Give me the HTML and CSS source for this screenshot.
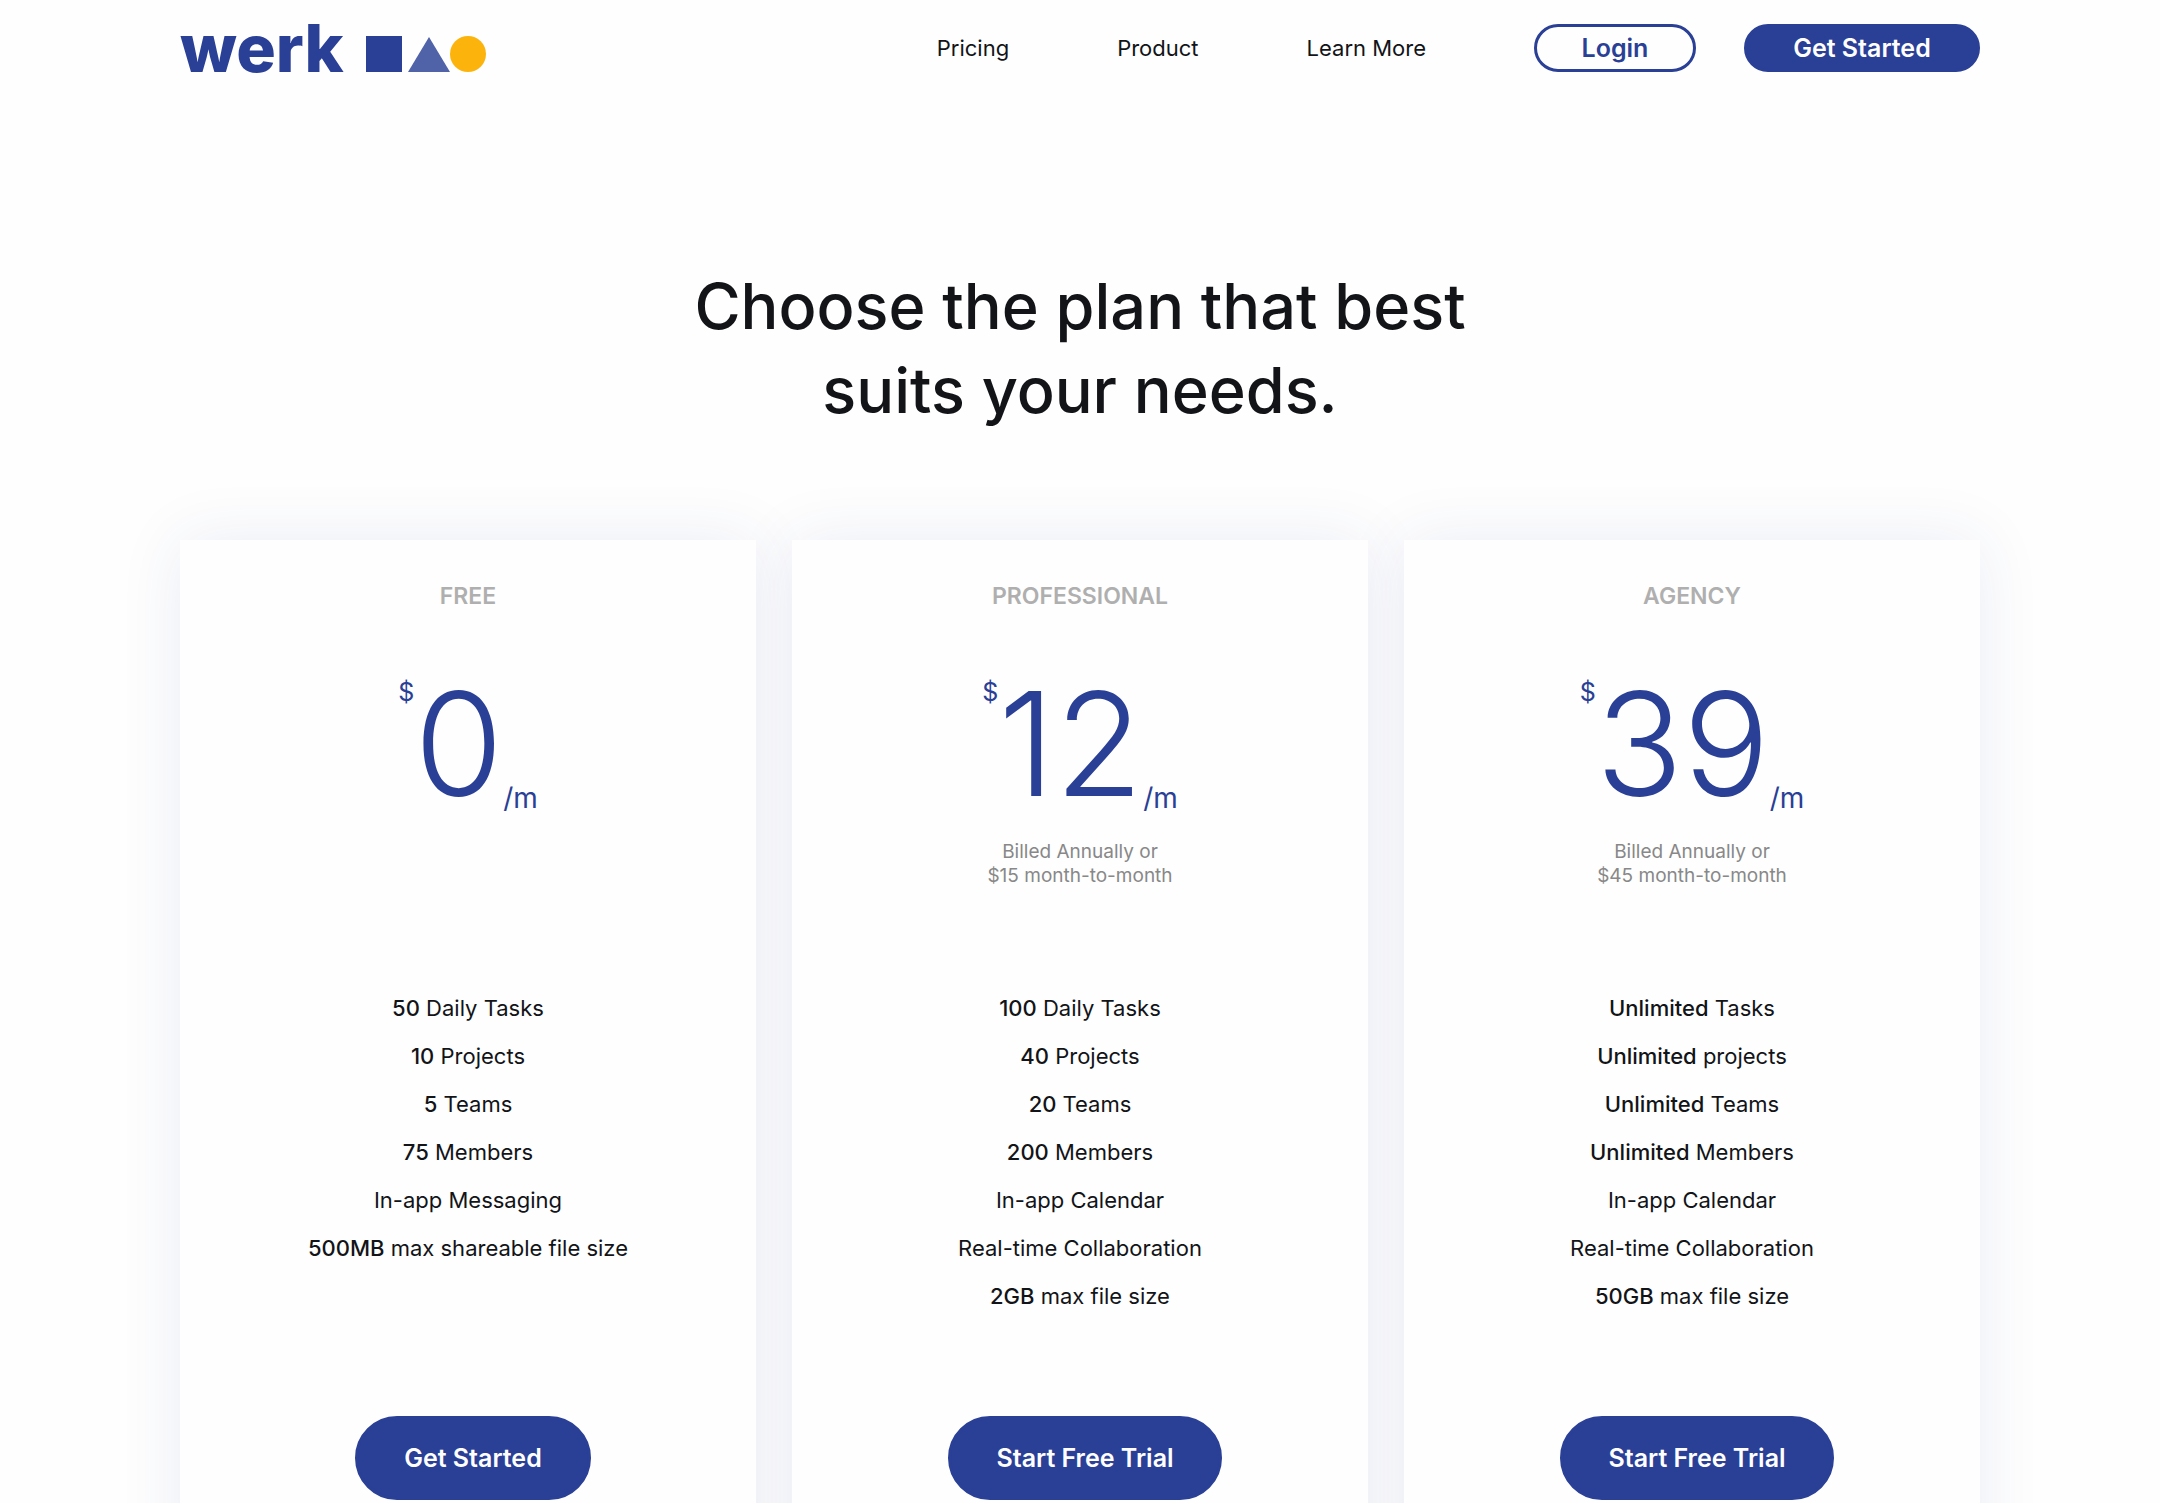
FILE: index.html
```html
<!DOCTYPE html>
<html lang="en">
<head>
<meta charset="utf-8">
<meta name="viewport" content="width=device-width, initial-scale=1">
<title>werk – Pricing</title>
<link rel="stylesheet" href="styles.css">
</head>
<body>
<header class="header">
  <a class="logo" href="#" aria-label="werk home">
    <span class="logo-text">werk</span>
    <svg class="logo-shapes" width="120" height="36" viewBox="0 0 120 36" aria-hidden="true">
      <rect width="36" height="36" fill="#2a3f96"/>
      <path d="M63 1 84 36H42Z" fill="#5062a8"/>
      <circle cx="102" cy="18" r="18" fill="#fcb40c"/>
    </svg>
  </a>
  <nav class="nav">
    <a class="nav-link" href="#">Pricing</a>
    <a class="nav-link" href="#">Product</a>
    <a class="nav-link" href="#">Learn More</a>
    <div class="nav-actions">
      <button class="button button-outline" type="button">Login</button>
      <button class="button button-small" type="button">Get Started</button>
    </div>
  </nav>
</header>
<main class="main">
  <h1 class="title">Choose the plan that best<br>suits your needs.</h1>
  <div class="plans">
    <section class="plan">
      <h2 class="plan-name">FREE</h2>
      <p class="price"><span class="currency">$</span><span class="amount">0</span><span class="period">/m</span></p>
      <p class="note"></p>
      <ul class="features">
        <li><b>50</b> Daily Tasks</li>
        <li><b>10</b> Projects</li>
        <li><b>5</b> Teams</li>
        <li><b>75</b> Members</li>
        <li>In-app Messaging</li>
        <li><b>500MB</b> max shareable file size</li>
      </ul>
      <div class="plan-action"><button class="button button-large" type="button">Get Started</button></div>
    </section>
    <section class="plan">
      <h2 class="plan-name">PROFESSIONAL</h2>
      <p class="price"><span class="currency">$</span><span class="amount">12</span><span class="period">/m</span></p>
      <p class="note">Billed Annually or<br>$15 month-to-month</p>
      <ul class="features">
        <li><b>100</b> Daily Tasks</li>
        <li><b>40</b> Projects</li>
        <li><b>20</b> Teams</li>
        <li><b>200</b> Members</li>
        <li>In-app Calendar</li>
        <li>Real-time Collaboration</li>
        <li><b>2GB</b> max file size</li>
      </ul>
      <div class="plan-action"><button class="button button-large button-wide" type="button">Start Free Trial</button></div>
    </section>
    <section class="plan">
      <h2 class="plan-name">AGENCY</h2>
      <p class="price"><span class="currency">$</span><span class="amount">39</span><span class="period">/m</span></p>
      <p class="note">Billed Annually or<br>$45 month-to-month</p>
      <ul class="features">
        <li><b>Unlimited</b> Tasks</li>
        <li><b>Unlimited</b> projects</li>
        <li><b>Unlimited</b> Teams</li>
        <li><b>Unlimited</b> Members</li>
        <li>In-app Calendar</li>
        <li>Real-time Collaboration</li>
        <li><b>50GB</b> max file size</li>
      </ul>
      <div class="plan-action"><button class="button button-large button-wide" type="button">Start Free Trial</button></div>
    </section>
  </div>
</main>
</body>
</html>
```
FILE: styles.css
```css
* {
  box-sizing: border-box;
  margin: 0;
  padding: 0;
}

body {
  background: #fefefe;
  color: #121418;
  font-family: Inter, "Open Sans", sans-serif;
  font-size: 22px;
}

a {
  color: inherit;
  text-decoration: none;
}

.header {
  display: flex;
  align-items: center;
  justify-content: space-between;
  padding: 0 180px;
  height: 96px;
}

.logo {
  display: flex;
  align-items: baseline;
  gap: 22px;
  color: #2a3f96;
}

.logo-text {
  font-size: 66px;
  font-weight: 800;
  line-height: 96px;
}

.nav {
  display: flex;
  align-items: center;
  gap: 108px;
}

.nav-actions {
  display: flex;
  gap: 48px;
}

.button {
  min-width: 236px;
  border: 3px solid #2a3f96;
  border-radius: 42px;
  background: #2a3f96;
  color: #fefefe;
  font: 600 25px/42px Inter, "Open Sans", sans-serif;
}

.button-outline {
  min-width: 162px;
  background: transparent;
  color: #2a3f96;
}

.button-large {
  line-height: 78px;
}

.button-wide {
  min-width: 274px;
}

.main {
  padding: 168px 180px 96px;
}

.title {
  margin-bottom: 108px;
  font-size: 63px;
  font-weight: 500;
  line-height: 84px;
  text-align: center;
}

.plans {
  display: grid;
  grid-template-columns: repeat(3, 1fr);
  gap: 36px;
  isolation: isolate;
}

.plan {
  position: relative;
  display: flex;
  flex-direction: column;
  padding: 36px 24px 96px;
  background: #fefefe;
  text-align: center;
}

/* The shadow sits below all cards so that it never tints a neighbour. */
.plan::before {
  content: "";
  position: absolute;
  inset: 0;
  z-index: -1;
  box-shadow: 0 0 60px rgba(42, 63, 150, 0.09);
}

.plan-name {
  margin-bottom: 56px;
  color: #afafaf;
  font-size: 23px;
  font-weight: 600;
  line-height: 40px;
}

.price {
  display: flex;
  justify-content: center;
  height: 144px;
  color: #2a3f96;
}

.currency {
  font-size: 25px;
  line-height: 40px;
}

.amount {
  font-size: 144px;
  font-weight: 300;
  line-height: 144px;
}

.period {
  align-self: flex-end;
  font-size: 28px;
  line-height: 36px;
}

.note {
  min-height: 48px;
  margin: 24px 0 96px;
  color: #888;
  font-size: 19px;
  line-height: 24px;
}

.features {
  min-height: 336px;
  margin-bottom: 96px;
  line-height: 48px;
  list-style: none;
}

.features b {
  font-weight: 500;
}

.plan-action {
  padding-left: 10px;
}
```
